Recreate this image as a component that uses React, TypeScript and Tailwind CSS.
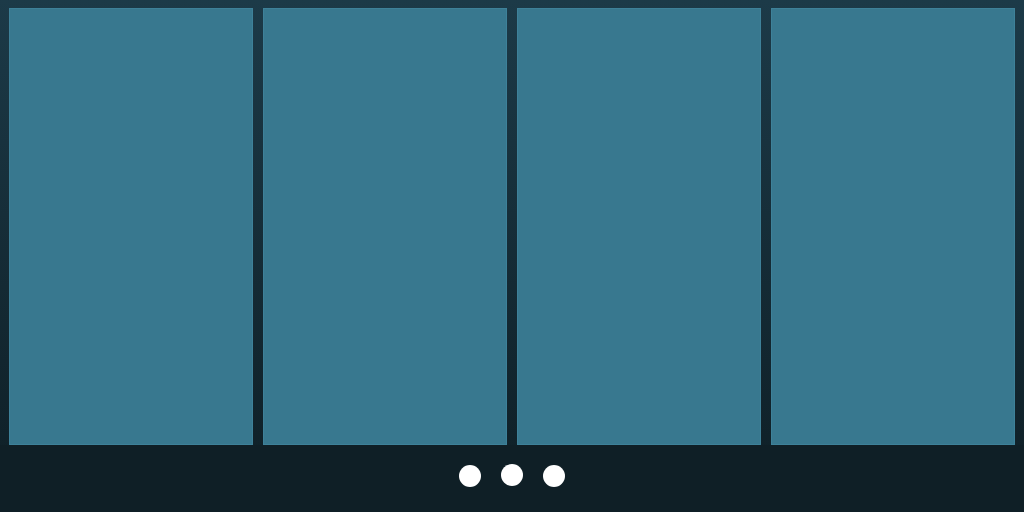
export default function App() {
  const panels = [0, 1, 2, 3];
  return (
    <div className="w-[1024px] h-[512px] flex flex-col bg-gradient-to-b from-[#1c3a48] to-[#0e1e25] overflow-hidden">
      <div className="flex gap-[10px] px-[9px] pt-[8px] h-[445px]">
        {panels.map((p) => (
          <div key={p} className="flex-1 h-full bg-[#38788f] border border-[#3e8199]" />
        ))}
      </div>
      <div className="flex-1 flex items-center justify-center gap-[20px] pb-[6px] bg-[#0f1f26]">
        <div className="w-[22px] h-[22px] rounded-full bg-white" />
        <div className="w-[22px] h-[22px] rounded-full bg-white -translate-y-[1px]" />
        <div className="w-[22px] h-[22px] rounded-full bg-white" />
      </div>
    </div>
  );
}
